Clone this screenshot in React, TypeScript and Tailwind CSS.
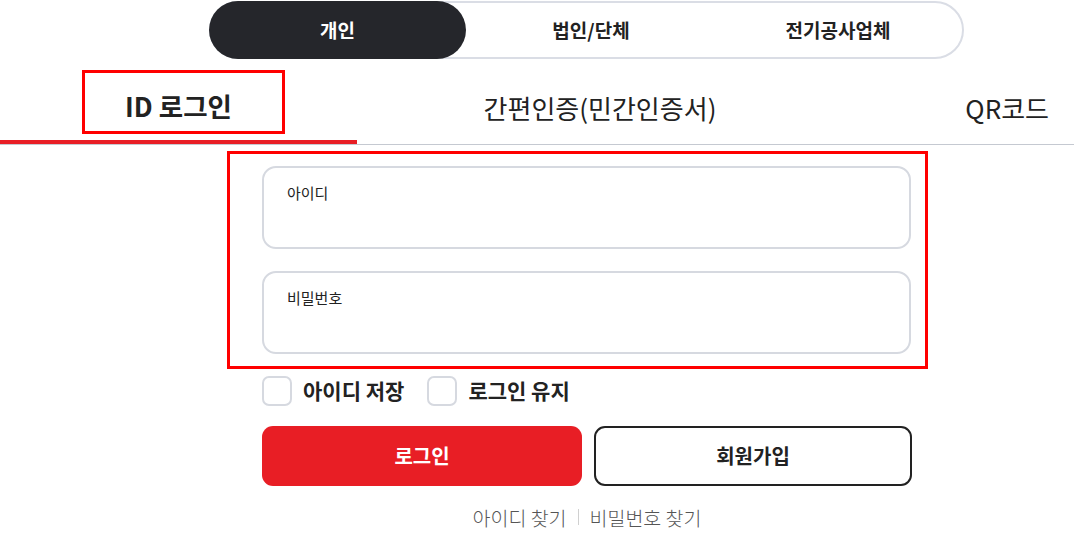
import React from "react";

export default function App() {
  return (
    <div
      className="w-[1074px] h-[543px] bg-white overflow-hidden text-[#222]"
      style={{ fontFamily: '"Noto Sans CJK KR", "Noto Sans", sans-serif' }}
    >
      {/* segmented control */}
      <div className="ml-[209px] mt-[1px] w-[755px] h-[58px] rounded-full border-2 border-[#dadde5] flex items-center">
        <div className="-ml-[2px] w-[257px] h-[58px] rounded-full bg-[#25262b] text-white flex items-center justify-center text-[19px] font-bold">
          개인
        </div>
        <div className="w-[250px] flex items-center justify-center text-[19px] font-bold">
          법인/단체
        </div>
        <div className="flex-1 flex items-center justify-center text-[19px] font-bold pr-[2px]">
          전기공사업체
        </div>
      </div>

      {/* tabs */}
      <div className="mt-[2px] flex border-b border-[#c5c9d1]">
        <div className="w-[357px] flex flex-col">
          <div className="mt-[9px] ml-[82px] w-[203px] h-[64px] border-[3px] border-[#ff0000] flex items-center justify-center pt-[8px] pr-[10px] text-[26.5px] font-bold text-[#222]">
            ID 로그인
          </div>
          <div className="mt-[6px] h-[4px] w-[357px] bg-[#e81e25]" />
        </div>
        <div className="w-[486px] flex items-center justify-center pt-[9px] text-[26px] text-[#222]">
          간편인증(민간인증서)
        </div>
        <div className="flex-1 flex items-center justify-end pr-[25px] pt-[9px] text-[26px] text-[#222]">
          QR코드
        </div>
      </div>

      {/* form fields with annotation box */}
      <div className="mt-[6px] ml-[227px] w-[701px] h-[218px] border-[3px] border-[#ff0000] pl-[32px] pt-[12px] flex flex-col gap-[22px]">
        <div className="w-[649px] h-[83px] rounded-[14px] border-2 border-[#d6d9e0] pl-[23px] pt-[14px] text-[15px] text-[#222]">
          아이디
        </div>
        <div className="w-[649px] h-[83px] rounded-[14px] border-2 border-[#d6d9e0] pl-[23px] pt-[14px] text-[15px] text-[#222]">
          비밀번호
        </div>
      </div>

      {/* checkboxes */}
      <div className="ml-[262px] mt-[6px] flex items-center">
        <div className="w-[30px] h-[30px] rounded-[7px] border-2 border-[#d6d9e0]" />
        <span className="ml-[11px] text-[21px] font-bold text-[#222]">아이디 저장</span>
        <div className="ml-[23px] w-[30px] h-[30px] rounded-[7px] border-2 border-[#d6d9e0]" />
        <span className="ml-[11px] text-[21px] font-bold text-[#222]">로그인 유지</span>
      </div>

      {/* buttons */}
      <div className="ml-[262px] mt-[19px] w-[650px] flex gap-[12px]">
        <div className="w-[320px] h-[60px] rounded-[11px] bg-[#e81e25] text-white flex items-center justify-center text-[20px] font-bold">
          로그인
        </div>
        <div className="flex-1 h-[60px] rounded-[11px] border-2 border-[#222] flex items-center justify-center text-[20px] font-bold text-[#222]">
          회원가입
        </div>
      </div>

      {/* links */}
      <div className="ml-[262px] mt-[17px] w-[650px] flex items-center justify-center text-[19.5px] font-light text-[#555]">
        <span>아이디 찾기</span>
        <span className="mx-[11px] w-px h-[16px] bg-[#d0d0d0]" />
        <span>비밀번호 찾기</span>
      </div>
    </div>
  );
}
